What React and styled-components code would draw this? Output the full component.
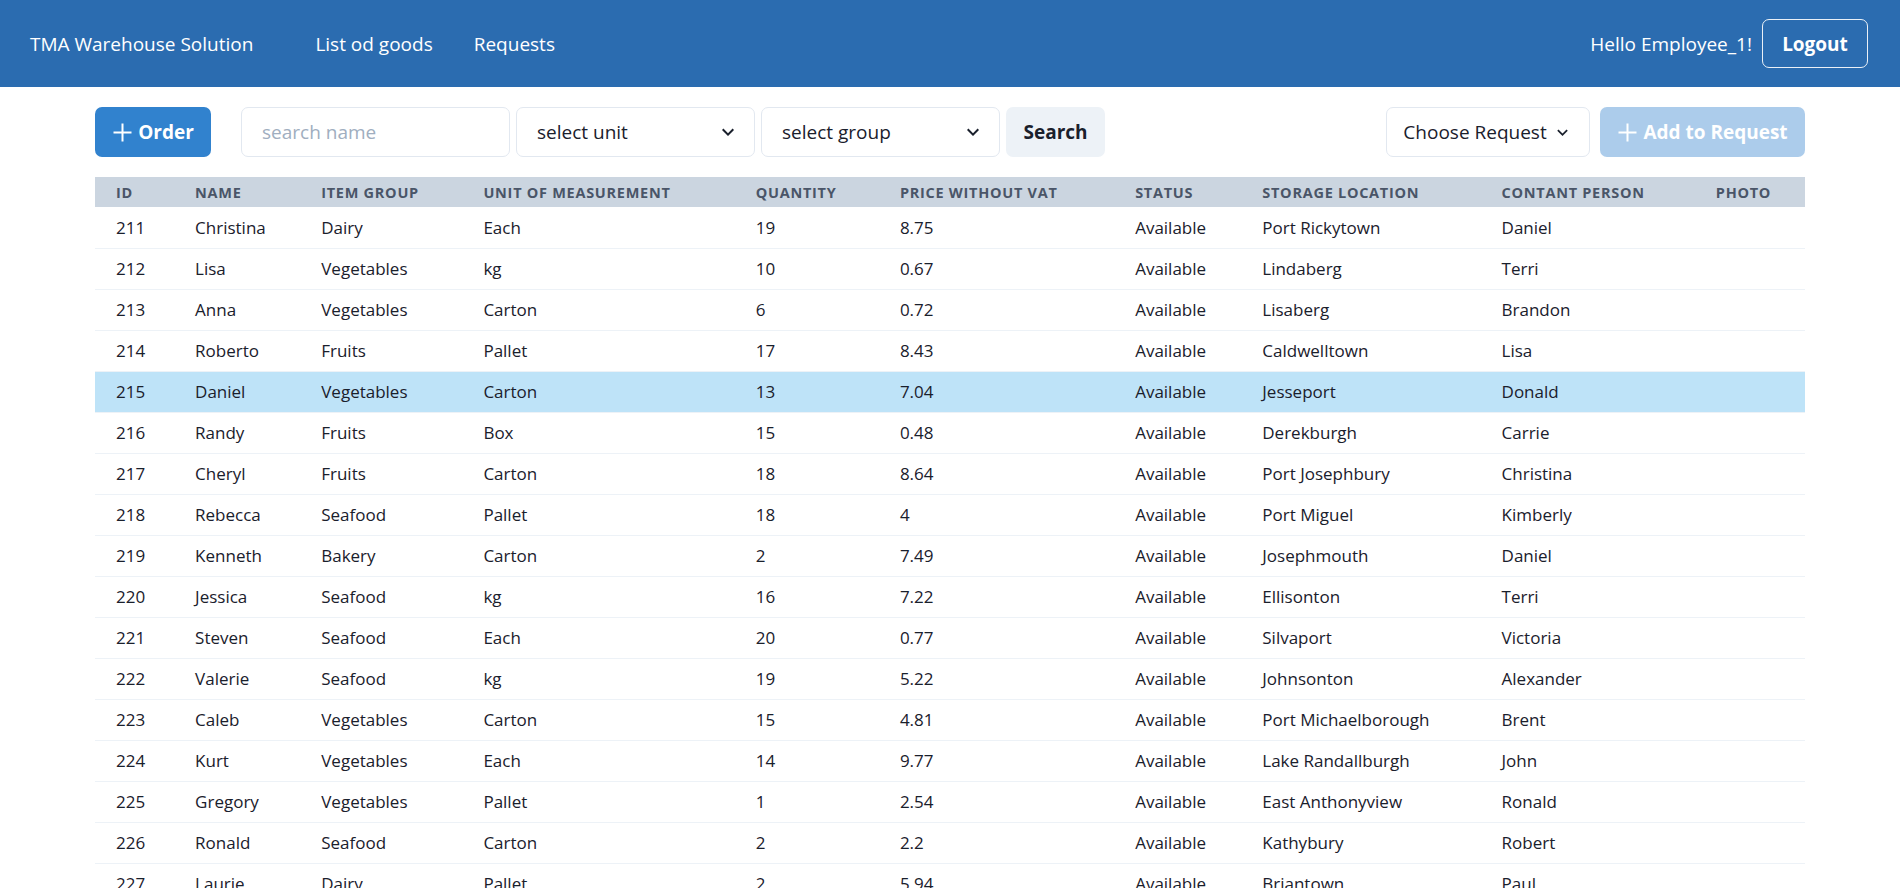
import React from "react";
import styled, { createGlobalStyle } from "styled-components";

const GlobalStyle = createGlobalStyle`
  html, body {
    margin: 0;
    padding: 0;
    background: #ffffff;
  }
  body {
    font-family: "Open Sans", "Noto Sans", "Liberation Sans", sans-serif;
    color: #1A202C;
  }
  * { box-sizing: border-box; }
`;

const Page = styled.div`
  height: 100vh;
  overflow: hidden;
  background: #fff;
`;

const NavBar = styled.header`
  height: 87px;
  background: #2B6CB0;
  color: #fff;
  display: flex;
  align-items: center;
  padding: 0 32px 0 30px;
`;

const Brand = styled.a`
  font-size: 19px;
  color: #fff;
  margin-right: 62px;
  white-space: nowrap;
`;

const NavLinks = styled.nav`
  display: flex;
  gap: 41px;
`;

const NavLink = styled.a`
  font-size: 19px;
  color: #fff;
  cursor: pointer;
`;

const Spacer = styled.div`
  flex: 1;
`;

const Hello = styled.span`
  font-size: 19px;
  margin-right: 10px;
`;

const LogoutButton = styled.button`
  width: 106px;
  height: 49px;
  border: 1px solid rgba(255, 255, 255, 0.9);
  border-radius: 7px;
  background: transparent;
  color: #fff;
  font-family: inherit;
  font-size: 19px;
  font-weight: 700;
  cursor: pointer;
`;

const Main = styled.main`
  padding: 20px 95px 0;
`;

const Toolbar = styled.div`
  display: flex;
  align-items: center;
  gap: 6px;
  margin-bottom: 20px;
`;

const SolidButton = styled.button`
  height: 50px;
  width: ${(p) => p.$w}px;
  border: none;
  border-radius: 7px;
  background: #3182CE;
  opacity: ${(p) => (p.$disabled ? 0.4 : 1)};
  color: #fff;
  font-family: inherit;
  font-size: 19px;
  font-weight: 700;
  display: flex;
  align-items: center;
  justify-content: center;
  gap: 5px;
  white-space: nowrap;
  margin-right: ${(p) => p.$mr || 0}px;
  cursor: ${(p) => (p.$disabled ? "not-allowed" : "pointer")};
  flex-shrink: 0;
`;

const GhostButton = styled.button`
  height: 50px;
  width: ${(p) => p.$w}px;
  border: none;
  border-radius: 7px;
  background: #EDF2F7;
  color: #1A202C;
  font-family: inherit;
  font-size: 19px;
  font-weight: 700;
  cursor: pointer;
  flex-shrink: 0;
`;

const TextInput = styled.input`
  height: 50px;
  width: ${(p) => p.$w}px;
  border: 1px solid #E2E8F0;
  border-radius: 7px;
  padding: 0 20px;
  font-family: inherit;
  font-size: 19px;
  color: #1A202C;
  outline: none;
  flex-shrink: 0;
  &::placeholder {
    color: #A0AEC0;
  }
`;

const SelectBox = styled.div`
  height: 50px;
  width: ${(p) => p.$w}px;
  border: 1px solid #E2E8F0;
  border-radius: 7px;
  padding: 0 ${(p) => (p.$center ? 0 : 14)}px 0 ${(p) => (p.$center ? 0 : 20)}px;
  display: flex;
  align-items: center;
  justify-content: ${(p) => (p.$center ? "center" : "space-between")};
  gap: ${(p) => (p.$center ? 5 : 0)}px;
  font-size: 19px;
  color: #1A202C;
  background: #fff;
  white-space: nowrap;
  cursor: pointer;
  flex-shrink: 0;
  margin-right: ${(p) => p.$mr || 0}px;
`;

const Table = styled.table`
  width: 100%;
  border-collapse: collapse;
  table-layout: fixed;
`;

const Th = styled.th`
  height: 30px;
  padding: 0 0 0 21px;
  text-align: left;
  background: #CBD5E0;
  color: #4A5568;
  font-size: 14.5px;
  font-weight: 700;
  text-transform: uppercase;
  letter-spacing: 0.05em;
  white-space: nowrap;
`;

const Tr = styled.tr`
  background: ${(p) => (p.$active ? "#BEE3F8" : "transparent")};
`;

const Td = styled.td`
  height: 41px;
  padding: 0 0 0 21px;
  border-bottom: 1px solid #EDF2F7;
  font-size: 17px;
  color: #1A202C;
  white-space: nowrap;
`;

const PlusIcon = () => (
  <svg width="21" height="21" viewBox="0 0 21 21" aria-hidden="true">
    <path d="M10.5 1.5v18M1.5 10.5h18" stroke="currentColor" strokeWidth="2" fill="none" />
  </svg>
);

const Chevron = ({ size = 24 }) => (
  <svg width={size} height={size} viewBox="0 0 24 24" aria-hidden="true">
    <path fill="currentColor" d="M16.59 8.59L12 13.17 7.41 8.59 6 10l6 6 6-6z" />
  </svg>
);

const columns = [
  ["ID", 79],
  ["Name", 126],
  ["Item group", 162],
  ["Unit of measurement", 272],
  ["Quantity", 144],
  ["Price without VAT", 235],
  ["Status", 127],
  ["Storage location", 239],
  ["Contant person", 214],
  ["Photo", 110],
];

const rows = [
  [211, "Christina", "Dairy", "Each", 19, "8.75", "Available", "Port Rickytown", "Daniel"],
  [212, "Lisa", "Vegetables", "kg", 10, "0.67", "Available", "Lindaberg", "Terri"],
  [213, "Anna", "Vegetables", "Carton", 6, "0.72", "Available", "Lisaberg", "Brandon"],
  [214, "Roberto", "Fruits", "Pallet", 17, "8.43", "Available", "Caldwelltown", "Lisa"],
  [215, "Daniel", "Vegetables", "Carton", 13, "7.04", "Available", "Jesseport", "Donald"],
  [216, "Randy", "Fruits", "Box", 15, "0.48", "Available", "Derekburgh", "Carrie"],
  [217, "Cheryl", "Fruits", "Carton", 18, "8.64", "Available", "Port Josephbury", "Christina"],
  [218, "Rebecca", "Seafood", "Pallet", 18, "4", "Available", "Port Miguel", "Kimberly"],
  [219, "Kenneth", "Bakery", "Carton", 2, "7.49", "Available", "Josephmouth", "Daniel"],
  [220, "Jessica", "Seafood", "kg", 16, "7.22", "Available", "Ellisonton", "Terri"],
  [221, "Steven", "Seafood", "Each", 20, "0.77", "Available", "Silvaport", "Victoria"],
  [222, "Valerie", "Seafood", "kg", 19, "5.22", "Available", "Johnsonton", "Alexander"],
  [223, "Caleb", "Vegetables", "Carton", 15, "4.81", "Available", "Port Michaelborough", "Brent"],
  [224, "Kurt", "Vegetables", "Each", 14, "9.77", "Available", "Lake Randallburgh", "John"],
  [225, "Gregory", "Vegetables", "Pallet", 1, "2.54", "Available", "East Anthonyview", "Ronald"],
  [226, "Ronald", "Seafood", "Carton", 2, "2.2", "Available", "Kathybury", "Robert"],
  [227, "Laurie", "Dairy", "Pallet", 2, "5.94", "Available", "Briantown", "Paul"],
];

export default function App() {
  return (
    <Page>
      <GlobalStyle />
      <NavBar>
        <Brand>TMA Warehouse Solution</Brand>
        <NavLinks>
          <NavLink>List od goods</NavLink>
          <NavLink>Requests</NavLink>
        </NavLinks>
        <Spacer />
        <Hello>Hello Employee_1!</Hello>
        <LogoutButton>Logout</LogoutButton>
      </NavBar>
      <Main>
        <Toolbar>
          <SolidButton $w={116} $mr={24}>
            <PlusIcon />
            Order
          </SolidButton>
          <TextInput $w={269} placeholder="search name" />
          <SelectBox $w={239}>
            select unit
            <Chevron />
          </SelectBox>
          <SelectBox $w={239}>
            select group
            <Chevron />
          </SelectBox>
          <GhostButton $w={99}>Search</GhostButton>
          <Spacer />
          <SelectBox $w={204} $center $mr={4}>
            Choose Request
            <Chevron size={21} />
          </SelectBox>
          <SolidButton $w={205} $disabled>
            <PlusIcon />
            Add to Request
          </SolidButton>
        </Toolbar>
        <Table>
          <colgroup>
            {columns.map(([name, w]) => (
              <col key={name} style={{ width: w }} />
            ))}
          </colgroup>
          <thead>
            <tr>
              {columns.map(([name]) => (
                <Th key={name}>{name}</Th>
              ))}
            </tr>
          </thead>
          <tbody>
            {rows.map((r) => (
              <Tr key={r[0]} $active={r[0] === 215}>
                {r.map((c, i) => (
                  <Td key={i}>{c}</Td>
                ))}
                <Td />
              </Tr>
            ))}
          </tbody>
        </Table>
      </Main>
    </Page>
  );
}
